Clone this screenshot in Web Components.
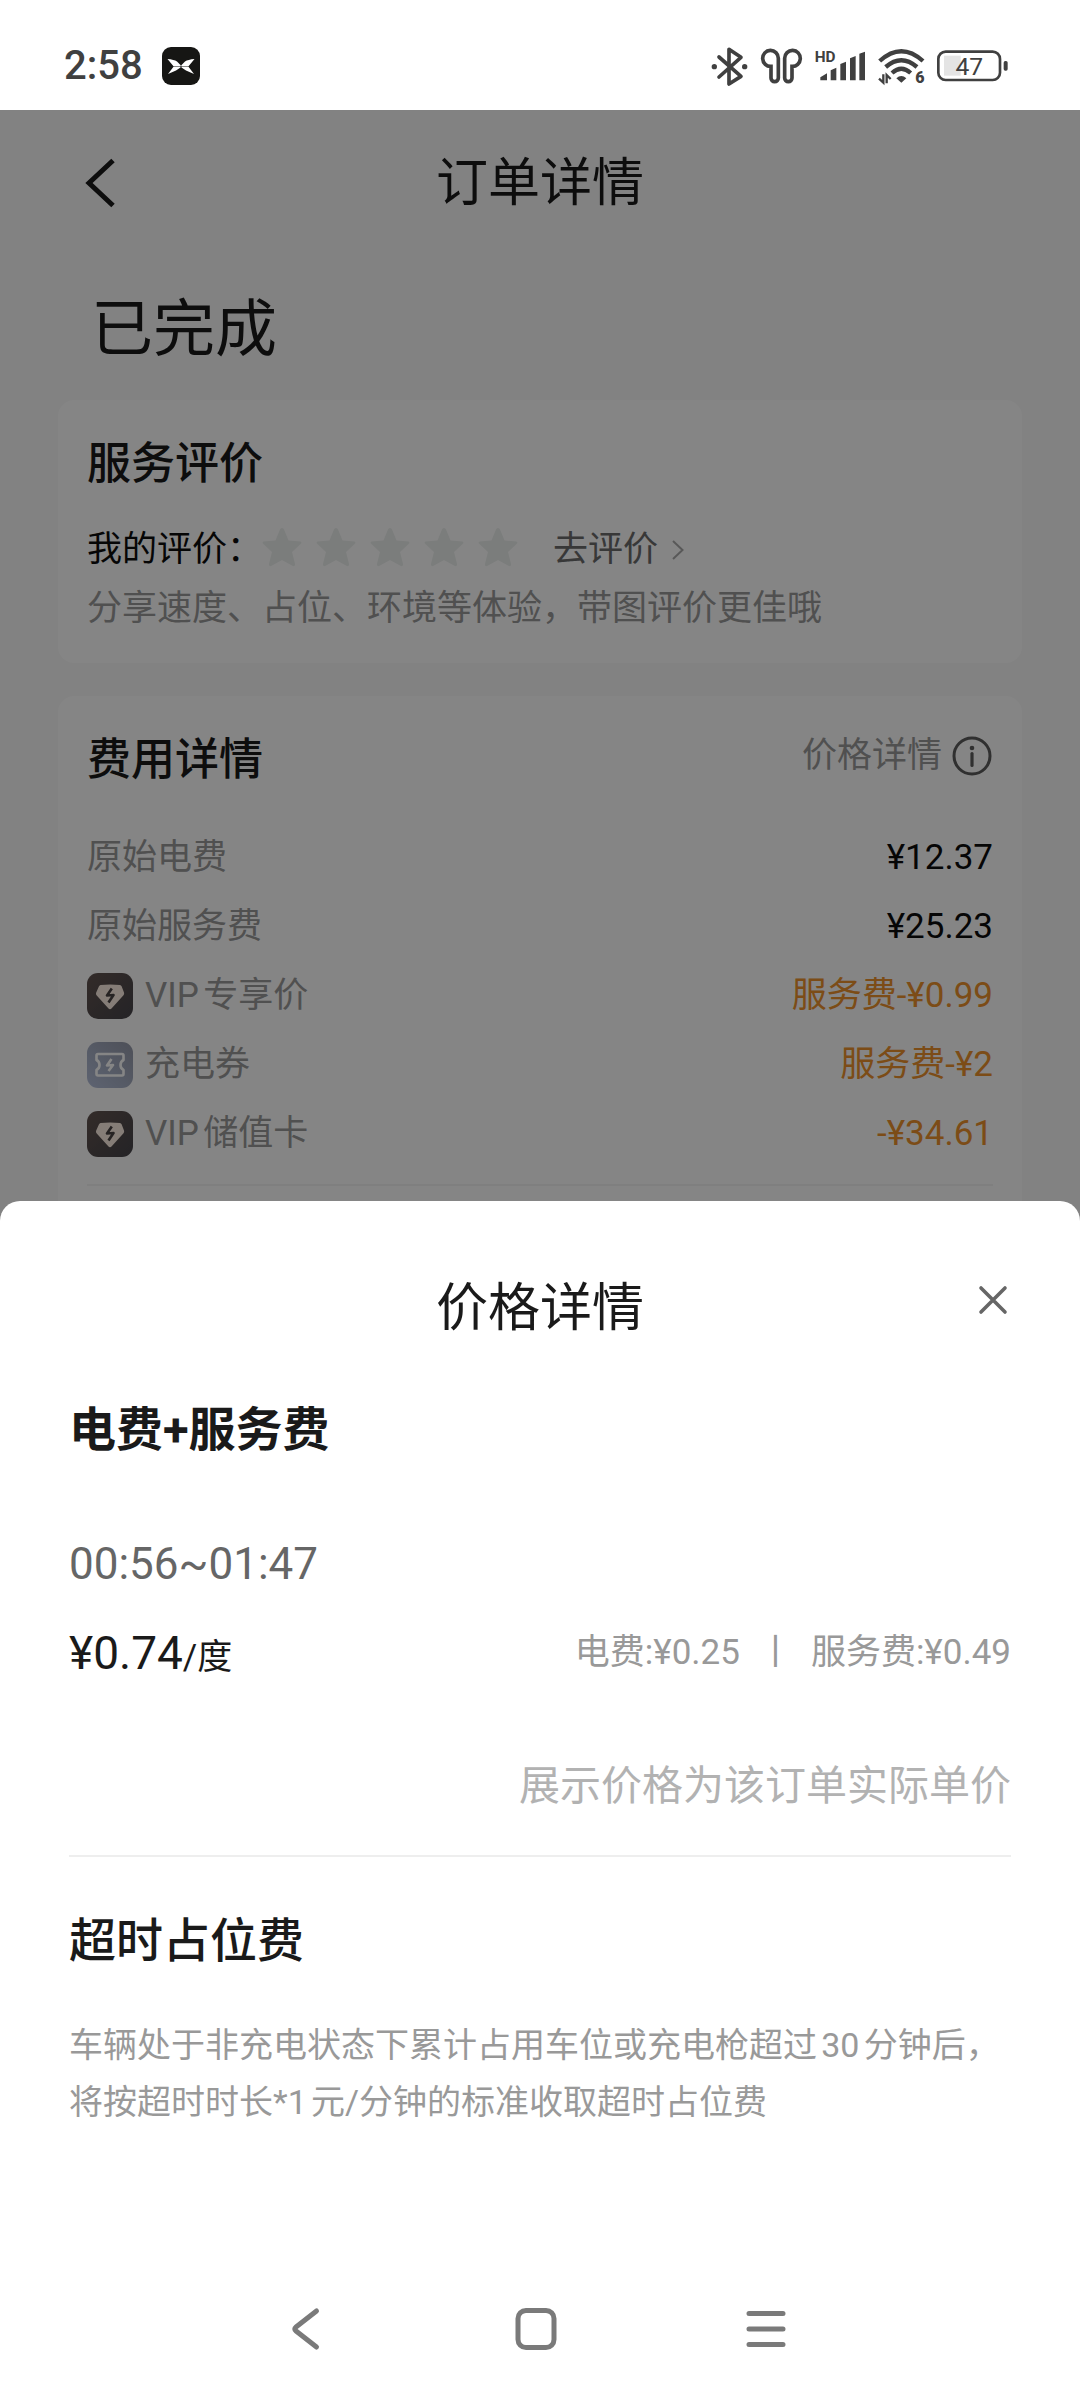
<!DOCTYPE html>
<html lang="zh-CN">
<head>
<meta charset="utf-8">
<meta name="viewport" content="width=device-width, initial-scale=1">
<title>订单详情</title>
<style>
  html, body { margin: 0; height: 100%; }
  body {
    font-family: Roboto, "Noto Sans CJK SC", sans-serif;
    font-size: 35px;
    color: #1a1a1a;
    background: #fff;
    text-autospace: normal;
  }
</style>
</head>
<body>
<phone-screen>
  <status-bar slot="status" time="2:58" battery="47"></status-bar>

  <order-page heading="订单详情" state="已完成">
    <rating-card></rating-card>
    <fee-card>
      <fee-row label="原始电费">¥12.37</fee-row>
      <fee-row label="原始服务费">¥25.23</fee-row>
      <fee-row label="VIP专享价" icon="vip" discount>服务费-¥0.99</fee-row>
      <fee-row label="充电券" icon="coupon" discount>服务费-¥2</fee-row>
      <fee-row label="VIP储值卡" icon="vip" discount>-¥34.61</fee-row>
    </fee-card>
  </order-page>

  <bottom-sheet slot="sheet" heading="价格详情">
    <sheet-section heading="电费+服务费" strong>
      <price-slot time="00:56~01:47" price="¥0.74" unit="/度" power="电费:¥0.25" service="服务费:¥0.49"></price-slot>
    </sheet-section>
    <sheet-section heading="超时占位费">
      <fee-note>车辆处于非充电状态下累计占用车位或充电枪超过30分钟后，将按超时时长*1元/分钟的标准收取超时占位费</fee-note>
    </sheet-section>
  </bottom-sheet>

  <system-nav slot="nav"></system-nav>
</phone-screen>

<script>
const BASE = `
  :host, *, *::before { box-sizing: border-box; }
  h1, h2, p { margin: 0; font-weight: 400; }
  button { padding: 0; border: 0; background: none; font: inherit; color: inherit; cursor: pointer; }
  a { color: inherit; text-decoration: none; }
  svg { display: block; flex: none; overflow: visible; }
`;

function define(name, render) {
  customElements.define(name, class extends HTMLElement {
    constructor() {
      super();
      this.attachShadow({ mode: "open" });
    }
    connectedCallback() {
      this.shadowRoot.innerHTML = `<style>${BASE}</style>` + render(this);
    }
  });
}

define("phone-screen", () => `
  <style>
    :host { display: flex; flex-direction: column; height: 100vh; }
    .stage { position: relative; flex: 1; min-height: 0; overflow: hidden; background: #f9f9f9; }
    .scrim { position: absolute; inset: 0; background: rgba(0, 0, 0, .48); }
    .dock { position: absolute; inset: auto 0 0 0; }
  </style>
  <slot name="status"></slot>
  <main class="stage">
    <slot></slot>
    <div class="scrim"></div>
    <div class="dock"><slot name="sheet"></slot></div>
  </main>
  <slot name="nav"></slot>
`);

define("status-bar", el => `
  <style>
    :host { display: flex; align-items: center; justify-content: space-between; height: 110px; padding: 22px 71px 0 64px; color: #404040; }
    .side { display: flex; align-items: center; }
    .time { font-size: 40px; line-height: 44px; font-weight: 500; margin-right: 19px; }
    .icons { gap: 12px; }
    text { font-family: Roboto, sans-serif; }
  </style>
  <div class="side">
    <span class="time">${el.getAttribute("time")}</span>
    <svg width="38" height="38" viewBox="0 0 38 38" aria-hidden="true">
      <rect width="38" height="38" rx="9" fill="#161614"/>
      <path fill="#fff" d="M5.500 12Q12 12.500 15 14.500L18.700 18.200V19.200H11.500zM32.500 12Q26 12.500 23 14.500L19.300 18.200V19.200H26.500zM6 27L11.500 19.800H18.500V20.600L14 23.500zM32 27L26.500 19.800H19.500V20.600L24 23.500z"/>
    </svg>
  </div>
  <div class="side icons">
    <svg width="37" height="39" viewBox="88 76 111 117" aria-hidden="true">
      <path fill="none" stroke="#404040" stroke-width="11" stroke-linejoin="round" stroke-linecap="round" d="M112 106L178 164L142 187V83L178 107L112 166"/>
      <circle cx="98" cy="135" r="8" fill="#404040"/><circle cx="189" cy="135" r="8" fill="#404040"/>
    </svg>
    <svg width="43" height="36" viewBox="240 84 129 108" aria-hidden="true">
      <g fill="none" stroke="#404040" stroke-width="11">
        <path d="M273 139V174a11 11 0 0 0 22 0V115a23.500 24 0 1 0 -22 24z"/>
        <path d="M336 139V174a11 11 0 0 1 -22 0V115a23.500 24 0 1 1 22 24z"/>
      </g>
    </svg>
    <svg width="51" height="36" viewBox="401 84 153 108" fill="#404040" aria-hidden="true">
      <text x="400" y="125" font-size="46" font-weight="700">HD</text>
      <path d="M417 181v-9l20-12v21zM448 181v-30l17-8v38zM477 181v-49l17-7v56zM506 181v-66l17-7v73zM534 181v-80l17-6v86z"/>
    </svg>
    <svg width="47" height="36" viewBox="590 84 141 108" fill="none" stroke="#404040" aria-hidden="true">
      <g stroke-width="13">
        <path d="M595 123Q660 64 725 123"/>
        <path d="M613 141Q660 100 707 141"/>
        <path d="M632 159Q660 134 688 159"/>
      </g>
      <path fill="#404040" stroke="none" d="M645 175Q660 161 675 175L660 188z"/>
      <path stroke-width="7" d="M606 163v25l-13-12M616 190v-25l12 12"/>
      <text x="702" y="190" font-size="48" font-weight="900" fill="#404040" stroke="none">6</text>
    </svg>
    <svg width="72" height="32" viewBox="774 89 216 96" role="img" aria-label="电量">
      <rect x="795" y="106" width="50" height="60" fill="#e4e4e4"/>
      <rect x="778" y="94" width="185" height="85" rx="22" fill="none" stroke="#404040" stroke-width="8"/>
      <rect x="974" y="122" width="12" height="29" rx="5" fill="#404040"/>
      <text x="871" y="163" font-size="74" text-anchor="middle" fill="#404040">${el.getAttribute("battery")}</text>
    </svg>
  </div>
`);

define("order-page", el => `
  <style>
    :host { display: block; }
    header { display: grid; grid-template-columns: 1fr auto 1fr; align-items: start; padding: 44px 84px 0; }
    .back { justify-self: start; }
    h1 { font-size: 52px; line-height: 60px; }
    .state { padding: 76px 91px 30px; font-size: 62px; line-height: 80px; }
    .cards { display: flex; flex-direction: column; gap: 33px; padding: 0 58px; }
  </style>
  <header>
    <button class="back" aria-label="返回">
      <svg width="32" height="58" viewBox="0 0 32 58"><path d="M29 6.500L5 29L29 51.500" fill="none" stroke="#1a1a1a" stroke-width="5"/></svg>
    </button>
    <h1>${el.getAttribute("heading")}</h1>
  </header>
  <p class="state">${el.getAttribute("state")}</p>
  <div class="cards"><slot></slot></div>
`);

const CARD = `
  :host { display: block; padding: 34px 29px 31px; border-radius: 16px; background: #fff; }
  h2 { font-size: 44px; line-height: 60px; font-weight: 500; }
`;

const STAR = `<svg width="40" height="40" viewBox="0 0 40 40"><path fill="#ebefed" d="M20 1Q21.300 1 22 2.500L26.500 13.500L38 14.500Q40.500 15 38.500 17L30 25L33 37Q33.200 40 30.500 38.800L20 33L9.500 38.800Q6.800 40 7 37L10 25L1.500 17Q-.5 15 2 14.500L13.500 13.500L18 2.500Q18.700 1 20 1z"/></svg>`;

define("rating-card", () => `
  <style>
    ${CARD}
    .rate { display: flex; align-items: flex-start; margin-top: 33px; line-height: 46px; color: #0d0d0d; }
    .stars { display: flex; gap: 14px; margin-right: 35px; }
    a { display: flex; align-items: center; gap: 13px; color: #6b6b6b; }
    .hint { margin-top: 13px; line-height: 46px; color: #999; }
  </style>
  <h2>服务评价</h2>
  <div class="rate">
    <span>我的评价：</span>
    <div class="stars" role="img" aria-label="未评分">${STAR.repeat(5)}</div>
    <a href="#rate">去评价
      <svg width="14" height="20" viewBox="0 0 14 20"><path d="M2 1L11.500 10L2 19" fill="none" stroke="#aaa" stroke-width="2"/></svg>
    </a>
  </div>
  <p class="hint">分享速度、占位、环境等体验，带图评价更佳哦</p>
`);

define("fee-card", () => `
  <style>
    ${CARD}
    header { display: flex; justify-content: space-between; align-items: flex-start; }
    button { display: flex; align-items: center; gap: 9px; height: 52px; line-height: 46px; color: #999; }
    .rows { display: flex; flex-direction: column; gap: 23px; margin-top: 45px; padding-bottom: 27px; border-bottom: 2px solid #f3f3f3; }
    .rest { height: 160px; }
  </style>
  <header>
    <h2>费用详情</h2>
    <button>价格详情
      <svg width="42" height="42" viewBox="0 0 42 42"><circle cx="21" cy="21" r="18" fill="none" stroke="#5c5c5c" stroke-width="3"/><circle cx="21" cy="13" r="2.300" fill="#5c5c5c"/><path d="M21 18.500V30.500" stroke="#5c5c5c" stroke-width="3.200" stroke-linecap="round"/></svg>
    </button>
  </header>
  <div class="rows"><slot></slot></div>
  <div class="rest"></div>
`);

const BADGES = {
  vip: `<svg width="46" height="46" viewBox="0 0 46 46" aria-hidden="true">
    <defs><linearGradient id="g" x1="0" y1="0" x2="1" y2="1"><stop offset="0" stop-color="#62544f"/><stop offset="1" stop-color="#46444a"/></linearGradient></defs>
    <rect width="46" height="46" rx="11" fill="url(#g)"/>
    <path fill="#fff0e4" d="M13.500 12Q23 11 33 12Q34 12.200 34.600 13.200L37 19.500Q37.500 21 36.500 22.200L24.500 35.500Q23 37 21.500 35.500L9.500 22.200Q8.500 21 9.200 19.500L12 13.200Q12.600 12.200 13.500 12z"/>
    <path fill="none" stroke="#4a4344" stroke-width="2.600" stroke-linejoin="round" d="M24.800 15.500L20 22.500L26.500 22L21.500 29.500"/>
  </svg>`,
  coupon: `<svg width="46" height="46" viewBox="0 0 46 46" aria-hidden="true">
    <defs><linearGradient id="g" x1="0" y1="1" x2="1" y2="0"><stop offset="0" stop-color="#b4bfda"/><stop offset="1" stop-color="#9499a8"/></linearGradient></defs>
    <rect width="46" height="46" rx="11" fill="url(#g)"/>
    <path fill="none" stroke="#fff" stroke-width="2.600" stroke-linejoin="round" d="M11 12H35Q36.500 12 36.500 13.500V18Q33.500 19.500 33.500 23T36.500 28V32Q36.500 33.500 35 33.500H11Q9.500 33.500 9.500 32V28Q12.500 26.500 12.500 23T9.500 18V13.500Q9.500 12 11 12z"/>
    <path fill="none" stroke="#fff" stroke-width="2.600" stroke-linejoin="round" d="M24.500 17L20 23.500L26 23L21.500 29"/>
  </svg>`
};

define("fee-row", el => `
  <style>
    :host { display: flex; align-items: center; justify-content: space-between; height: 46px; line-height: 46px; color: #0d0d0d; }
    :host([discount]) { color: #ee922c; }
    .label { display: flex; align-items: center; gap: 12px; color: #999; }
  </style>
  <span class="label">${BADGES[el.getAttribute("icon")] || ""}<span>${el.getAttribute("label")}</span></span>
  <span><slot></slot></span>
`);

define("bottom-sheet", el => `
  <style>
    :host { display: block; padding: 78px 69px 127px; border-radius: 20px 20px 0 0; background: #fff; }
    header { display: grid; grid-template-columns: 1fr auto 1fr; align-items: start; }
    h1 { grid-column: 2; font-size: 52px; line-height: 60px; }
    .close { justify-self: end; width: 36px; height: 42px; display: grid; place-items: center; }
  </style>
  <header>
    <h1>${el.getAttribute("heading")}</h1>
    <button class="close" aria-label="关闭">
      <svg width="30" height="30" viewBox="0 0 30 30"><path d="M3 3L27 27M27 3L3 27" stroke="#666" stroke-width="3.600" stroke-linecap="round"/></svg>
    </button>
  </header>
  <slot></slot>
`);

define("sheet-section", el => `
  <style>
    :host { display: block; padding-top: 54px; }
    :host([strong]) { padding-top: 61px; padding-bottom: 44px; border-bottom: 2px solid #eee; }
    h2 { font-size: 47px; line-height: 60px; font-weight: 500; }
    :host([strong]) h2 { font-weight: 700; }
  </style>
  <h2>${el.getAttribute("heading")}</h2>
  <slot></slot>
`);

define("price-slot", el => `
  <style>
    :host { display: block; padding-top: 79px; line-height: 50px; }
    .time { font-size: 44px; color: #666; }
    .row { display: flex; justify-content: space-between; align-items: center; margin-top: 39px; }
    .price { font-size: 46px; }
    .unit { font-size: 35px; line-height: 1; }
    .parts { display: flex; gap: 18px; color: #999; text-autospace: no-autospace; }
    .note { margin-top: 83px; font-size: 41px; text-align: right; color: #b2b2b2; }
  </style>
  <p class="time">${el.getAttribute("time")}</p>
  <div class="row">
    <span class="price">${el.getAttribute("price")}<span class="unit">${el.getAttribute("unit")}</span></span>
    <span class="parts"><span>${el.getAttribute("power")}</span><span>丨</span><span>${el.getAttribute("service")}</span></span>
  </div>
  <p class="note">展示价格为该订单实际单价</p>
`);

define("fee-note", () => `
  <style>
    :host { display: block; padding-top: 46px; font-size: 34px; line-height: 57px; color: #999; }
  </style>
  <p><slot></slot></p>
`);

define("system-nav", () => `
  <style>
    :host { display: flex; justify-content: center; align-items: center; gap: 188px; height: 142px; padding-right: 9px; background: #fff; }
    button { display: grid; place-items: center; }
    svg { fill: none; stroke: #7a7a7a; stroke-width: 5; stroke-linecap: round; stroke-linejoin: round; }
  </style>
  <button aria-label="返回"><svg width="42" height="44" viewBox="0 0 42 44"><path d="M31.500 4L11 20Q8.500 22 11 24L31.500 40"/></svg></button>
  <button aria-label="主页"><svg width="42" height="44" viewBox="0 0 42 44"><rect x="3" y="3.500" width="36" height="37" rx="8"/></svg></button>
  <button aria-label="最近任务"><svg width="42" height="44" viewBox="0 0 42 44"><path d="M4 6.500H38M4 22H38M4 37.500H38"/></svg></button>
`);
</script>
</body>
</html>
